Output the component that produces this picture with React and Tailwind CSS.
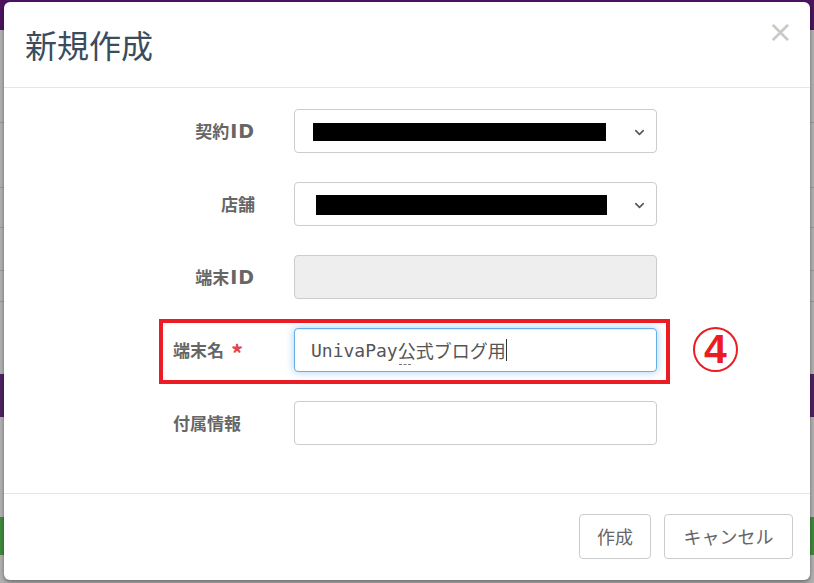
import { ChevronDown } from "lucide-react";

const jp = { fontFamily: '"Noto Sans CJK JP", "Noto Sans", sans-serif' };
const latin = { fontFamily: '"DejaVu Sans", sans-serif' };

// one labelled row of the form; the lower rows have left-aligned labels
function Row({ label, left, required, children }) {
  return (
    <div className="flex items-center h-[44px]">
      <div
        className={
          left
            ? "w-[251px] pl-[169px] text-[17px] font-bold text-[#666] flex items-center"
            : "w-[251px] text-[17px] font-bold text-[#666] flex justify-end items-center"
        }
      >
        {label}
        {required && <span className="text-[#e0474c] ml-[7px] text-[24px] leading-none mt-[6px]">*</span>}
      </div>
      <div className="ml-[39px] w-[363px] h-full">{children}</div>
    </div>
  );
}

function Select({ barLeft, barWidth, barTop, barHeight }) {
  return (
    <div className="h-full rounded border border-[#ccc] bg-white flex items-center relative">
      <div className="bg-black" style={{ marginLeft: barLeft, width: barWidth, height: barHeight, marginTop: barTop }} />
      <ChevronDown size={15} strokeWidth={2.5} className="absolute right-[9px] top-[15px] text-[#555]" />
    </div>
  );
}

const Id = () => <span className="text-[19px] tracking-[1px] ml-[1px]" style={latin}>ID</span>;

export default function App() {
  return (
    <div className="w-[814px] h-[583px] relative overflow-hidden bg-[#b1b1b1]" style={jp}>
      {/* page behind the overlay */}
      <div className="flex flex-col h-full">
        <div className="h-[30px] bg-[#4c145f]" />
        <div className="h-[10px]" />
        <div className="h-[83px] border-b border-[#999]" />
        <div className="h-[65px] border-b border-[#999]" />
        <div className="h-[40px] border-b border-[#999]" />
        <div className="h-[43px] border-b border-[#999]" />
        <div className="h-[31px] border-b border-[#999]" />
        <div className="h-[72px]" />
        <div className="h-[43px] bg-[#4d2262]" />
        <div className="h-[100px]" />
        <div className="h-[38px] bg-[#3f8a3c]" />
        <div className="flex-1" />
      </div>

      {/* modal */}
      <div className="absolute left-[4px] top-[2px] w-[806px] h-[578px] bg-white rounded-md shadow-[0_2px_4px_rgba(0,0,0,0.4)] flex flex-col">
        <div className="h-[86px] flex items-center justify-between pl-[21px] pr-[17px] border-b border-[#e5e5e5]">
          <h1 className="text-[32px] text-[#3b4c5d] font-normal leading-none mb-[2px]">新規作成</h1>
          <span className="text-[30px] text-[#c8c8c8] leading-none mb-[26px]" style={latin}>×</span>
        </div>

        <div className="pt-[21px] pb-[48px] flex flex-col gap-[29px] border-b border-[#e5e5e5]">
          <Row label={<>契約<Id /></>}>
            <Select barLeft={18} barWidth={293} barHeight={18} barTop={1} />
          </Row>
          <Row label="店舗">
            <Select barLeft={21} barWidth={291} barHeight={20} barTop={2} />
          </Row>
          <Row label={<>端末<Id /></>}>
            <div className="h-full rounded border border-[#ccc] bg-[#eee]" />
          </Row>
          <Row label="端末名" left required>
            <div className="h-full rounded border border-[#66afe9] bg-white shadow-[inset_0_1px_1px_rgba(0,0,0,0.075),0_0_8px_rgba(102,175,233,0.6)] flex items-center pl-[16px] text-[18px] text-[#555]">
              <span style={{ fontFamily: '"DejaVu Sans Mono", "Noto Sans CJK JP", monospace' }}>UnivaPay</span>
              <span className="relative">
                公
                <span className="absolute left-[1px] right-[5px] bottom-[-1px] border-b border-dashed border-[#777]" />
              </span>
              <span>式ブログ用</span>
              <span className="w-px h-[22px] bg-[#333]" />
            </div>
          </Row>
          <Row label="付属情報" left>
            <div className="h-full rounded border border-[#ccc] bg-white" />
          </Row>
        </div>

        <div className="flex-1 flex justify-end items-start pt-[20px] pr-[17px] gap-[13px]">
          <button className="h-[45px] w-[72px] rounded border border-[#ccc] bg-white text-[18px] text-[#666]">作成</button>
          <button className="h-[45px] w-[129px] rounded border border-[#ccc] bg-white text-[18px] text-[#666]">キャンセル</button>
        </div>
      </div>

      {/* annotation overlay */}
      <div className="absolute left-[159px] top-[319px] w-[511px] h-[65px] border-[4px] border-[#ec1c24]" />
      <div className="absolute left-[693px] top-[327px] w-[45px] h-[45px] rounded-full border-2 border-[#ec1c24] flex items-center justify-center">
        <span className="text-[41px] font-bold text-[#ec1c24] leading-none" style={{ fontFamily: '"Liberation Sans", sans-serif' }}>4</span>
      </div>
    </div>
  );
}
